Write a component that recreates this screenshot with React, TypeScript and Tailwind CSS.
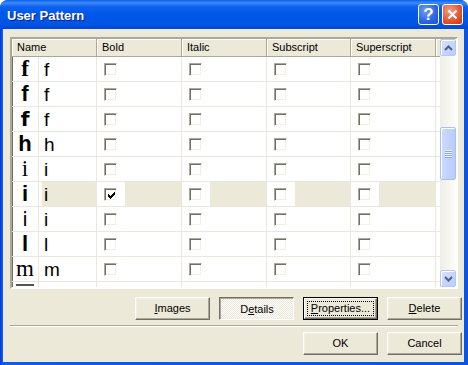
import React from 'react';

const UI = "font-['Liberation_Sans',Arial,sans-serif]";

type Row = {
  glyph: string;
  glyphClass: string;
  text: string;
  selected?: boolean;
  bold?: boolean;
};

const rows: Row[] = [
  { glyph: 'f', glyphClass: "font-['Liberation_Serif',serif] font-bold text-[23px]", text: 'f' },
  { glyph: 'f', glyphClass: "font-['Liberation_Sans',sans-serif] font-bold text-[22px]", text: 'f' },
  { glyph: 'f', glyphClass: "font-['DejaVu_Sans',sans-serif] font-bold text-[20px]", text: 'f' },
  { glyph: 'h', glyphClass: "font-['Liberation_Sans',sans-serif] font-bold text-[22px]", text: 'h' },
  { glyph: 'i', glyphClass: "font-['Liberation_Serif',serif] text-[23px]", text: 'i' },
  { glyph: 'i', glyphClass: "font-['Liberation_Sans',sans-serif] font-bold text-[22px]", text: 'i', selected: true, bold: true },
  { glyph: 'i', glyphClass: "font-['DejaVu_Sans',sans-serif] text-[20px]", text: 'i' },
  { glyph: 'l', glyphClass: "font-['Liberation_Sans',sans-serif] font-bold text-[22px]", text: 'l' },
  { glyph: 'm', glyphClass: "font-['Liberation_Serif',serif] text-[23px]", text: 'm' },
];

// classic 7x7 tick
const tick = [[6, 6], [5, 6], [0, 0, 4, 6], [0, 1, 3, 5], [0, 4], [1, 3], [2, 2]];

function Check({ checked }: { checked?: boolean }) {
  return (
    <div className="w-[13px] h-[13px] bg-white border border-t-[#ACA899] border-l-[#ACA899] border-r-white border-b-white shadow-[inset_1px_1px_0_#716F64,inset_-1px_-1px_0_#F1EFE2] flex items-center justify-center">
      {checked && (
        <svg width="7" height="7" viewBox="0 0 7 7" shapeRendering="crispEdges" className="ml-[1px] mt-[1px]">
          {tick.map((r, y) =>
            r.length === 2 ? (
              <rect key={y} x={r[0]} y={y} width={r[1] - r[0] + 1} height={1} fill="#000" />
            ) : (
              <g key={y}>
                <rect x={r[0]} y={y} width={r[1] - r[0] + 1} height={1} fill="#000" />
                <rect x={r[2]} y={y} width={r[3] - r[2] + 1} height={1} fill="#000" />
              </g>
            )
          )}
        </svg>
      )}
    </div>
  );
}

function CheckCell({ w, selected, checked }: { w: string; selected?: boolean; checked?: boolean }) {
  return (
    <div className={`${w} flex h-full border-r border-[#EAE8DC]`}>
      <div className="w-[28px] h-full bg-white pl-[7px] pt-[6px]">
        <Check checked={checked} />
      </div>
      <div className={`flex-1 h-full ${selected ? 'bg-[#ECE9D8]' : ''}`} />
    </div>
  );
}

function ScrollBtn({ up }: { up?: boolean }) {
  return (
    <div className="h-[17px] shrink-0 rounded-[2px] border border-[#B4C8F6] bg-[linear-gradient(135deg,#D5E1FD,#B9CDFB)] shadow-[inset_1px_1px_0_#FFFFFF] flex items-center justify-center">
      <svg width="9" height="6" viewBox="0 0 9 6">
        <path d={up ? 'M1 5 L4.5 1.5 L8 5' : 'M1 1 L4.5 4.5 L8 1'} fill="none" stroke="#4D6185" strokeWidth="2" />
      </svg>
    </div>
  );
}

function HeaderCell({ label, w }: { label: string; w: string }) {
  return (
    <div className={`${w} h-full flex items-center pl-[5px] border-r border-[#ACA899] shadow-[inset_1px_1px_0_#FFFFFF] text-[11px] text-black`}>
      {label}
    </div>
  );
}

function Button({ children, kind }: { children: React.ReactNode; kind?: 'pressed' | 'focus' }) {
  if (kind === 'pressed') {
    return (
      <div className="w-[75px] h-[23px] border border-t-[#716F64] border-l-[#716F64] border-r-white border-b-white shadow-[inset_1px_1px_0_#ACA899,inset_-1px_-1px_0_#F1EFE2] bg-[repeating-conic-gradient(#FFFFFF_0_25%,#ECE9D8_0_50%)] bg-[length:2px_2px] flex items-center justify-center pt-[2px] pl-[1px] text-[11px] text-black">
        {children}
      </div>
    );
  }
  if (kind === 'focus') {
    return (
      <div className="w-[75px] h-[23px] border border-black">
        <div className="w-full h-full border border-t-white border-l-white border-r-[#716F64] border-b-[#716F64] shadow-[inset_-1px_-1px_0_#ACA899] bg-[#ECE9D8] p-[2px]">
          <div className="w-full h-full border border-dotted border-black flex items-center justify-center text-[11px] text-black">
            {children}
          </div>
        </div>
      </div>
    );
  }
  return (
    <div className="w-[75px] h-[23px] border border-t-white border-l-white border-r-[#716F64] border-b-[#716F64] shadow-[inset_-1px_-1px_0_#ACA899,inset_1px_1px_0_#F1EFE2] bg-[#ECE9D8] flex items-center justify-center text-[11px] text-black">
      {children}
    </div>
  );
}

export default function App() {
  return (
    <div className={`${UI} w-[468px] h-[365px] flex flex-col rounded-t-[8px] overflow-hidden bg-[#0A4FE0]`}>
      {/* title bar */}
      <div className="h-[29px] shrink-0 flex items-center pl-[7px] pr-[5px] bg-[linear-gradient(to_bottom,#0A5FEF_0%,#3D8BF5_10%,#1064F0_22%,#0058E8_45%,#0055E5_80%,#0048D6_100%)]">
        <span className="text-[13px] font-bold text-white pt-[2px] [text-shadow:1px_1px_0_#0A1D8A]">User Pattern</span>
        <div className="flex-1" />
        <div className="w-[21px] h-[21px] rounded-[3px] border border-white bg-[radial-gradient(circle_at_35%_30%,#6C9CF7,#2B64E6_60%,#1E4FCF)] flex items-center justify-center text-white text-[17px] font-bold leading-none mr-[3px]">
          ?
        </div>
        <div className="w-[21px] h-[21px] rounded-[3px] border border-white bg-[radial-gradient(circle_at_35%_30%,#F0A288,#E0532F_60%,#C23B17)] flex items-center justify-center">
          <svg width="11" height="11" viewBox="0 0 11 11">
            <path d="M1.5 1.5 L9.5 9.5 M9.5 1.5 L1.5 9.5" stroke="#FFFFFF" strokeWidth="2.2" />
          </svg>
        </div>
      </div>

      {/* frame + client */}
      <div className="flex-1 flex flex-col pl-[3px] pr-[4px] pb-[3px] bg-[linear-gradient(to_right,#0831D9,#0C5BEA_2px,#0A55E6)]">
        <div className="flex-1 flex flex-col bg-[#ECE9D8]">
          {/* list view */}
          <div className="mt-[8px] ml-[7px] mr-[6px] h-[252px] border-2 border-t-[#ACA899] border-l-[#ACA899] border-r-white border-b-white bg-white flex overflow-hidden shadow-[inset_1px_1px_0_#716F64]">
            <div className="w-[428px] flex flex-col overflow-hidden">
              <div className="h-[18px] shrink-0 flex bg-[#ECE9D8] border-b border-[#ACA899]">
                <HeaderCell label="Name" w="w-[85px]" />
                <HeaderCell label="Bold" w="w-[85px]" />
                <HeaderCell label="Italic" w="w-[85px]" />
                <HeaderCell label="Subscript" w="w-[84px]" />
                <HeaderCell label="Superscript" w="w-[85px]" />
                <div className="flex-1 shadow-[inset_1px_1px_0_#FFFFFF]" />
              </div>
              {rows.map((r, i) => (
                <div key={i} className="h-[25px] shrink-0 flex border-b border-[#EAE8DC]">
                  <div className="w-[85px] h-full flex border-r border-[#EAE8DC]">
                    <div className={`w-[27px] h-full border-r border-[#EAE8DC] flex items-center justify-center leading-[22px] text-black ${r.glyphClass}`}>
                      {r.glyph}
                    </div>
                    <div className="w-[3px] h-full" />
                    <div className={`flex-1 h-full flex items-center pl-[2px] pt-[2px] text-[19px] leading-[22px] text-black ${r.selected ? 'bg-[#ECE9D8]' : ''}`}>
                      {r.text}
                    </div>
                  </div>
                  <CheckCell w="w-[85px]" selected={r.selected} checked={r.bold} />
                  <CheckCell w="w-[85px]" selected={r.selected} />
                  <CheckCell w="w-[84px]" selected={r.selected} />
                  <CheckCell w="w-[85px]" selected={r.selected} />
                </div>
              ))}
              {/* partly scrolled-in row */}
              <div className="h-[25px] shrink-0 flex">
                <div className="w-[85px] h-full flex border-r border-[#EAE8DC]">
                  <div className="w-[27px] h-full border-r border-[#EAE8DC] flex justify-center pt-[2px]">
                    <div className="w-[18px] h-[2px] bg-[#555]" />
                  </div>
                </div>
                <CheckCell w="w-[85px]" />
                <CheckCell w="w-[85px]" />
                <CheckCell w="w-[84px]" />
                <CheckCell w="w-[85px]" />
              </div>
            </div>
            {/* scrollbar */}
            <div className="w-[16px] flex flex-col bg-[linear-gradient(to_right,#EEEDE5,#FDFDFB)]">
              <ScrollBtn up />
              <div className="h-[71px] shrink-0" />
              <div className="h-[53px] shrink-0 rounded-[2px] border border-[#A9BFF4] bg-[linear-gradient(to_right,#CCDBFD,#B8CCFB)] shadow-[inset_1px_1px_0_#FFFFFF] flex flex-col items-center justify-center gap-[1px]">
                {[0, 1, 2, 3].map((k) => (
                  <div key={k} className="w-[7px] h-[1px] bg-[#EEF4FE] shadow-[0_1px_0_#8CA6E8]" />
                ))}
              </div>
              <div className="flex-1" />
              <ScrollBtn />
            </div>
          </div>

          {/* action buttons */}
          <div className="mt-[8px] flex justify-end gap-[9px] pr-[2px]">
            <Button>
              <span className="underline">I</span>mages
            </Button>
            <Button kind="pressed">
              D<span className="underline">e</span>tails
            </Button>
            <Button kind="focus">
              <span className="underline">P</span>roperties...
            </Button>
            <Button>
              <span className="underline">D</span>elete
            </Button>
          </div>

          {/* separator */}
          <div className="mt-[5px] ml-[7px] mr-[6px] h-[2px] border-t border-[#ACA899] border-b border-b-white" />

          <div className="mt-[5px] flex justify-end gap-[9px] pr-[2px]">
            <Button>OK</Button>
            <Button>Cancel</Button>
          </div>
        </div>
      </div>
    </div>
  );
}
